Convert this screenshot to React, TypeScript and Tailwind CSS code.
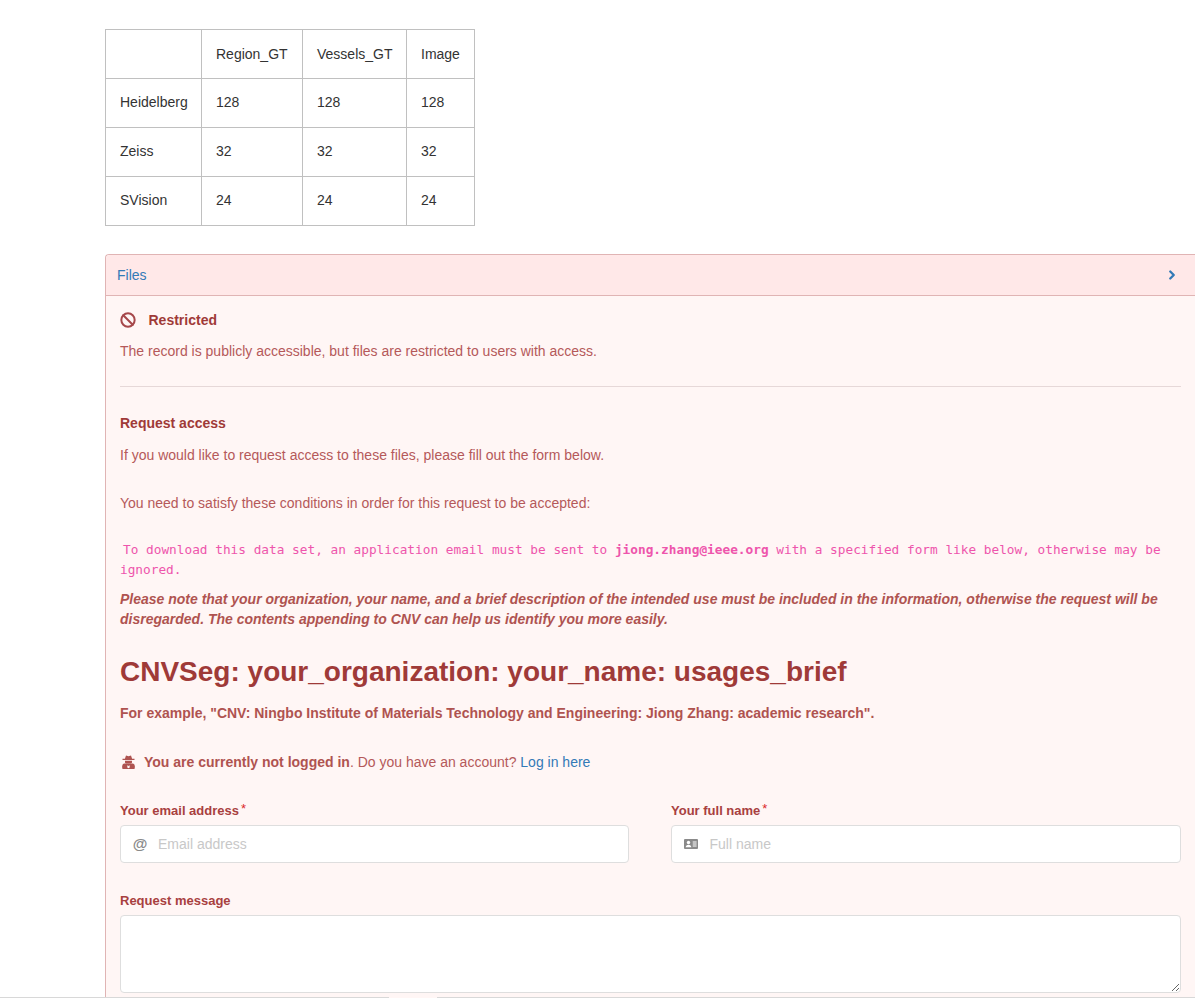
import React from "react";
import { Ban, ChevronRight } from "lucide-react";

const rows = [
  ["Heidelberg", "128", "128", "128"],
  ["Zeiss", "32", "32", "32"],
  ["SVision", "24", "24", "24"],
];
const colW = ["w-[96px]", "w-[101px]", "w-[104px]", "w-[68px]"];
const cell = "border border-[#c0c0c0] px-[14px] align-middle font-normal";

function Spy() {
  return (
    <svg viewBox="0 0 13 14" className="w-[13px] h-[14px] fill-[#af5350] shrink-0 ml-[2px]">
      <path d="M4 0.500l2.500.7 2.500-.7 1.100 3.200H12.500V5H.5V3.700H2.900z" />
      <path d="M3 5.800h7V7.200c0 .8-.9 1.300-1.700 1.300H4.700C3.900 8.500 3 8 3 7.200z" />
      <path d="M2.500 8.500h8c1.400 0 2.300 1.300 2.300 2.800V13c0 .5-.4 1-1 1H1.200C.6 14 .2 13.500.2 13v-1.700c0-1.500.9-2.800 2.300-2.800z" />
      <path d="M5.300 10.200l1.200.9 1.200-.9v2.300l-1.200.7-1.200-.7z" fill="#fff6f5" />
    </svg>
  );
}

function AddressCard() {
  return (
    <svg viewBox="0 0 14 10" className="w-[14px] h-[10px] shrink-0 -ml-[0.5px]">
      <rect x="0" y="0" width="14" height="10" rx="1" fill="#8a8a8a" />
      <circle cx="4.500" cy="3.500" r="1.700" fill="#fff" />
      <path d="M1.700 8.300c0-1.500 1.200-2.500 2.800-2.500s2.800 1 2.800 2.500z" fill="#fff" />
      <path d="M8.700 2.600h3.900v1H8.700zM8.700 4.600h3.900v1H8.700zM8.700 6.600h3.900v1H8.700z" fill="#fff" />
    </svg>
  );
}

export default function App() {
  return (
    <div className="relative w-[1195px] h-[998px] overflow-hidden bg-white pl-[105px] pt-[29px] text-[14px] leading-[20px] text-[#333333] [font-family:'Liberation_Sans',Arial,sans-serif] flex flex-col">
      <table className="border-collapse w-[370px] table-fixed">
        <tbody>
          <tr className="h-[49px]">
            <td className={`${cell} ${colW[0]}`}></td>
            <td className={`${cell} ${colW[1]}`}>Region_GT</td>
            <td className={`${cell} ${colW[2]}`}>Vessels_GT</td>
            <td className={`${cell} ${colW[3]}`}>Image</td>
          </tr>
          {rows.map((r) => (
            <tr key={r[0]} className="h-[49px]">
              {r.map((c, i) => (
                <td key={i} className={`${cell} ${colW[i]} pb-[2px]`}>{c}</td>
              ))}
            </tr>
          ))}
        </tbody>
      </table>

      <section className="mt-[28px] w-[1090px] flex-1 border border-r-0 border-b-0 border-[#e0b4b4] rounded-tl-[4px] bg-[#fff6f5]">
        <div className="h-[41px] bg-[#ffe8e8] border-b border-[#e0b4b4] flex items-center justify-between pl-[11px] pr-[16px] rounded-tl-[4px]">
          <span className="text-[#337ab7]">Files</span>
          <ChevronRight className="w-[14px] h-[14px] text-[#337ab7]" strokeWidth={4} />
        </div>

        <div className="px-[14px] text-[#b5595a]">
          <div className="flex items-center mt-[14px] h-[20px]">
            <Ban className="w-[16px] h-[16px] text-[#a6474a] -ml-[0.5px]" strokeWidth={3} />
            <span className="ml-[13px] font-bold text-[#9f3a38]">Restricted</span>
          </div>
          <p className="mt-[11px]">The record is publicly accessible, but files are restricted to users with access.</p>
          <div className="mt-[25px] h-px bg-[#e6d8d8]" />

          <h3 className="mt-[26px] font-bold text-[#9f3a38]">Request access</h3>
          <p className="mt-[12px]">If you would like to request access to these files, please fill out the form below.</p>
          <p className="mt-[28px]">You need to satisfy these conditions in order for this request to be accepted:</p>
          <p className="mt-[27px] indent-[3px] text-[12.78px] [font-family:'DejaVu_Sans_Mono',monospace] text-[#ee55ac]">
            To download this data set, an application email must be sent to <b className="font-bold">jiong.zhang@ieee.org</b> with a specified form like below, otherwise may be ignored.
          </p>
          <p className="mt-[9px] font-bold italic text-[#af5350]">
            Please note that your organization, your name, and a brief description of the intended use must be included in the information, otherwise the request will be disregarded. The contents appending to CNV can help us identify you more easily.
          </p>
          <h1 className="mt-[25px] text-[28px] leading-[36px] font-bold text-[#9f3a38]">CNVSeg: your_organization: your_name: usages_brief</h1>
          <p className="mt-[13px] font-bold text-[#af5350]">For example, "CNV: Ningbo Institute of Materials Technology and Engineering: Jiong Zhang: academic research".</p>

          <div className="mt-[29px] flex items-center h-[20px]">
            <Spy />
            <span className="ml-[9px]">
              <b className="font-bold text-[#af5350]">You are currently not logged in</b>. Do you have an account? <span className="text-[#337ab7]">Log in here</span>
            </span>
          </div>

          <div className="mt-[29px] grid grid-cols-[509px_510px] gap-x-[42px]">
            <div>
              <div className="h-[20px] text-[13px] font-bold text-[#a8403f] flex">Your email address<span className="ml-[2px] font-normal text-[#db2828] -mt-[2px]">*</span></div>
              <div className="mt-[4px] h-[38px] bg-white border border-[#dedede] rounded-[4px] flex items-center pl-[12px]">
                <span className="font-bold text-[15px] text-[#8a8a8a] w-[14px] flex justify-center">@</span>
                <span className="ml-[11px] text-[#c8c8c8]">Email address</span>
              </div>
            </div>
            <div>
              <div className="h-[20px] text-[13px] font-bold text-[#a8403f] flex">Your full name<span className="ml-[2px] font-normal text-[#db2828] -mt-[2px]">*</span></div>
              <div className="mt-[4px] h-[38px] bg-white border border-[#dedede] rounded-[4px] flex items-center pl-[12px]">
                <AddressCard />
                <span className="ml-[12px] text-[#c8c8c8]">Full name</span>
              </div>
            </div>
          </div>

          <div className="mt-[28px] h-[20px] text-[13px] font-bold text-[#a8403f]">Request message</div>
          <textarea className="mt-[4px] block w-full h-[78px] bg-white border border-[#dedede] rounded-[4px]" />
        </div>
      </section>

      <div className="absolute left-0 bottom-0 h-px w-[389px] bg-[#d8d8d8]" />
      <div className="absolute left-[437px] right-0 bottom-0 h-px bg-[#d8d8d8]" />
    </div>
  );
}
